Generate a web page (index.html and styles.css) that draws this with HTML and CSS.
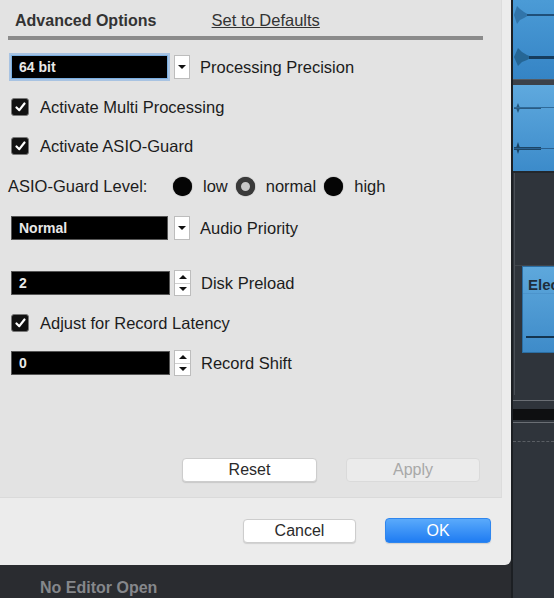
FILE: index.html
```html
<!DOCTYPE html>
<html>
<head>
    <link rel="stylesheet" href="styles.css">
</head>
<body>
    <div class="screen">
        <div class="left">
            <div class="dialog">
                <div class="panel">
                    <div class="tabs">
                        <span class="tab-title">Advanced Options</span>
                        <span class="tab-link">Set to Defaults</span>
                    </div>
                    <div class="tab-rule"></div>
                    <div class="options">
                        <div class="row row-precision">
                            <div class="field focused">64 bit</div>
                            <div class="drop"><span class="tri-down"></span></div>
                            <span class="label">Processing Precision</span>
                        </div>
                        <div class="row row-check">
                            <span class="check"><svg width="11" height="10" viewBox="0 0 11 10"><path d="M1.5 5.5 L4.3 8.2 L9.5 1.5" fill="none" stroke="#fff" stroke-width="2.2" stroke-linecap="round" stroke-linejoin="round"/></svg></span>
                            <span class="check-label">Activate Multi Processing</span>
                        </div>
                        <div class="row row-check row-asio">
                            <span class="check"><svg width="11" height="10" viewBox="0 0 11 10"><path d="M1.5 5.5 L4.3 8.2 L9.5 1.5" fill="none" stroke="#fff" stroke-width="2.2" stroke-linecap="round" stroke-linejoin="round"/></svg></span>
                            <span class="check-label">Activate ASIO-Guard</span>
                        </div>
                        <div class="row row-level">
                            <span class="level-label">ASIO-Guard Level:</span>
                            <span class="radio"></span><span class="radio-label">low</span>
                            <span class="radio hollow"></span><span class="radio-label">normal</span>
                            <span class="radio"></span><span class="radio-label">high</span>
                        </div>
                        <div class="row row-priority">
                            <div class="field">Normal</div>
                            <div class="drop"><span class="tri-down"></span></div>
                            <span class="label">Audio Priority</span>
                        </div>
                        <div class="row row-preload">
                            <div class="field number">2</div>
                            <div class="spin">
                                <span class="spin-half"><span class="tri-up"></span></span>
                                <span class="spin-half"><span class="tri-down"></span></span>
                            </div>
                            <span class="label">Disk Preload</span>
                        </div>
                        <div class="row row-check">
                            <span class="check"><svg width="11" height="10" viewBox="0 0 11 10"><path d="M1.5 5.5 L4.3 8.2 L9.5 1.5" fill="none" stroke="#fff" stroke-width="2.2" stroke-linecap="round" stroke-linejoin="round"/></svg></span>
                            <span class="check-label">Adjust for Record Latency</span>
                        </div>
                        <div class="row">
                            <div class="field number">0</div>
                            <div class="spin">
                                <span class="spin-half"><span class="tri-up"></span></span>
                                <span class="spin-half"><span class="tri-down"></span></span>
                            </div>
                            <span class="label">Record Shift</span>
                        </div>
                    </div>
                    <div class="panel-buttons">
                        <button class="btn btn-reset">Reset</button>
                        <button class="btn btn-apply">Apply</button>
                    </div>
                </div>
                <div class="dialog-buttons">
                    <button class="btn btn-cancel">Cancel</button>
                    <button class="btn btn-ok">OK</button>
                </div>
            </div>
            <div class="status">No Editor Open</div>
        </div>
        <div class="daw">
            <div class="track track-top">
                <svg width="41" height="79" viewBox="0 0 41 79">
                    <path d="M1 15 L4 6 L7 9 L11 12 L16 15 L11 18 L7 20 L4 24 Z" fill="#2c6c9f" opacity="0.8"/>
                    <rect x="14" y="14" width="27" height="2" fill="#1f4f78"/>
                    <path d="M1 57 L5 48 L9 52 L14 55 L19 57 L14 60 L9 62 L5 66 Z" fill="#24628f" opacity="0.9"/>
                    <rect x="16" y="56" width="25" height="3" fill="#163d5e"/>
                </svg>
            </div>
            <div class="track-sep"></div>
            <div class="track track-second">
                <svg width="41" height="86" viewBox="0 0 41 86">
                    <path d="M3 23 L5 18 L7 23 L5 28 Z" fill="#24577f"/>
                    <rect x="1" y="22" width="27" height="2" fill="#2a5b83"/>
                    <rect x="1" y="22" width="40" height="1" fill="#2f6a99"/>
                    <path d="M3 63 L5 57 L7 63 L5 69 Z" fill="#1b4466"/>
                    <rect x="1" y="62" width="27" height="3" fill="#1c4566"/>
                    <rect x="1" y="63" width="40" height="1" fill="#2a6190"/>
                </svg>
            </div>
            <div class="lane">
                <div class="lane-gap"></div>
                <div class="clip">
                    <div class="clip-head">Elec</div>
                    <div class="clip-body"></div>
                </div>
            </div>
            <div class="rulers">
                <div class="ruler-line"></div>
                <div class="ruler-band"></div>
                <div class="ruler-line"></div>
                <div class="ruler-dash"></div>
            </div>
        </div>
    </div>
</body>
</html>
```

FILE: styles.css
```css
body {
    margin: 0;
    background: #2b2d31;
    font-family: "Liberation Sans", Arial, sans-serif;
}

.screen {
    display: flex;
    width: 554px;
    height: 598px;
    overflow: hidden;
}

.left {
    width: 511px;
    flex-shrink: 0;
    display: flex;
    flex-direction: column;
    background: #2a2c30;
}

.dialog {
    height: 565px;
    background: #ececec;
    border-bottom-right-radius: 6px;
    display: flex;
    flex-direction: column;
}

.panel {
    width: 502px;
    height: 498px;
    background: #e3e3e3;
    display: flex;
    flex-direction: column;
    box-sizing: border-box;
    border-right: 1px solid #dcdcdc;
    border-bottom: 1px solid #dadada;
}

.tabs {
    height: 36px;
    box-sizing: border-box;
    padding: 11px 0 0 15px;
    font-size: 16.5px;
    line-height: 18px;
    color: #2a2a2a;
    white-space: nowrap;
}

.tab-title {
    display: inline-block;
    width: 192px;
    font-size: 16px;
    font-weight: bold;
    color: #333;
}

.tab-link {
    text-decoration: underline;
    color: #333;
}

.tab-rule {
    height: 4px;
    margin: 0 18px 0 8px;
    background: #8b8b8b;
}

.options {
    display: flex;
    flex-direction: column;
    gap: 14px;
    padding: 14px 0 0 11px;
}

.row {
    display: flex;
    align-items: center;
    height: 26px;
    font-size: 16.5px;
    color: #1c1c1c;
    white-space: nowrap;
}

.row-asio {
    margin-top: -1px;
}

.row-priority {
    margin-top: 2px;
}

.row-preload {
    margin-top: 15px;
}

.field {
    width: 157px;
    height: 24px;
    box-sizing: border-box;
    background: #000;
    border: 1px solid #555;
    color: #e8e8e8;
    font-size: 14px;
    font-weight: bold;
    line-height: 22px;
    padding-left: 7px;
}

.field.focused {
    border-color: #7aaee0;
    box-shadow: 0 0 0 2px rgba(120, 170, 225, 0.55);
}

.field.number {
    width: 159px;
}

.drop {
    width: 16px;
    height: 24px;
    box-sizing: border-box;
    margin-left: 6px;
    background: #fff;
    border: 1px solid #bdbdbd;
    display: flex;
    align-items: center;
    justify-content: center;
}

.spin {
    width: 17px;
    height: 26px;
    box-sizing: border-box;
    margin-left: 4px;
    background: #fff;
    border: 1px solid #bdbdbd;
    display: flex;
    flex-direction: column;
}

.spin-half {
    flex: 1;
    display: flex;
    align-items: center;
    justify-content: center;
}

.spin-half + .spin-half {
    border-top: 1px solid #d0d0d0;
}

.tri-down {
    width: 0;
    height: 0;
    border-left: 4px solid transparent;
    border-right: 4px solid transparent;
    border-top: 4px solid #111;
}

.tri-up {
    width: 0;
    height: 0;
    border-left: 4px solid transparent;
    border-right: 4px solid transparent;
    border-bottom: 4px solid #111;
}

.label {
    margin-left: 10px;
}

.check {
    width: 18px;
    height: 18px;
    box-sizing: border-box;
    border-radius: 3px;
    background: #111;
    border: 1px solid #777;
    display: flex;
    align-items: center;
    justify-content: center;
}

.check-label {
    margin-left: 11px;
}

.level-label {
    margin-left: -3px;
    width: 165px;
}

.radio {
    width: 19px;
    height: 19px;
    border-radius: 50%;
    background: #050505;
    box-shadow: 0 0 1px #000;
}

.radio.hollow {
    width: 19px;
    height: 19px;
    box-sizing: border-box;
    border: 5px solid #3a3a3a;
    background: #c9c9c9;
}

.radio-label {
    margin: 0 8px 0 11px;
}

.panel-buttons {
    margin-top: auto;
    padding: 0 21px 15px 0;
    display: flex;
    justify-content: flex-end;
    gap: 29px;
}

.btn {
    height: 24px;
    box-sizing: border-box;
    border-radius: 4px;
    border: 1px solid #cdcdcd;
    background: #fff;
    font-family: "Liberation Sans", Arial, sans-serif;
    font-size: 16px;
    color: #2a2a2a;
    padding: 0;
    box-shadow: 0 1px 1px rgba(0, 0, 0, 0.12);
}

.btn-reset {
    width: 135px;
}

.btn-apply {
    width: 134px;
    background: #ebebeb;
    border-color: #dadada;
    color: #a8a8a8;
    box-shadow: none;
}

.dialog-buttons {
    display: flex;
    justify-content: flex-end;
    gap: 29px;
    padding: 20px 20px 0 0;
    align-items: center;
}

.btn-cancel {
    width: 113px;
}

.btn-ok {
    width: 106px;
    height: 25px;
    border: 1px solid #2f86ee;
    background: linear-gradient(#5aaafb, #1f7cf2);
    color: #fff;
}

.status {
    flex: 1;
    padding: 14px 0 0 40px;
    font-size: 16px;
    font-weight: bold;
    color: #85878b;
}

.daw {
    flex: 1;
    min-width: 0;
    overflow: hidden;
    display: flex;
    flex-direction: column;
    background: #2f343b;
    border-left: 2px solid #1c1f23;
}

.track {
    background: linear-gradient(#4b9bd6, #3584c5);
}

.track svg {
    display: block;
}

.track-top {
    height: 79px;
}

.track-sep {
    height: 6px;
    background: #3c4149;
    border-top: 1px solid #555b62;
    box-sizing: border-box;
}

.track-second {
    height: 86px;
    background: linear-gradient(#5fa9de, #3c8bca);
    border-bottom: 2px solid #23272c;
}

.lane {
    height: 222px;
    border-left: 1px solid #4a4f56;
    margin-left: 1px;
    display: flex;
    flex-direction: column;
}

.lane-gap {
    height: 92px;
    border-bottom: 1px solid #40454c;
}

.clip {
    margin-left: 7px;
    height: 87px;
    background: linear-gradient(#5ea8dc, #3e8bc9);
    border: 1px solid #2b6ea3;
    border-right: none;
    box-sizing: border-box;
}

.clip-head {
    height: 27px;
    box-sizing: border-box;
    padding: 9px 0 0 5px;
    font-size: 15px;
    font-weight: bold;
    color: #1f2d3b;
    border-bottom: 1px solid #4c94cc;
    white-space: nowrap;
}

.clip-body {
    height: 42px;
    margin-left: 3px;
    border-bottom: 2px solid #14344f;
}

.rulers {
    margin-top: 5px;
    display: flex;
    flex-direction: column;
}

.ruler-line {
    height: 1px;
    background: #6a6e74;
    margin-bottom: 8px;
}

.ruler-band {
    height: 11px;
    background: #0e0f11;
    margin-bottom: 2px;
}

.ruler-dash {
    margin-top: 10px;
    border-top: 1px dashed #5a5e64;
}
```
